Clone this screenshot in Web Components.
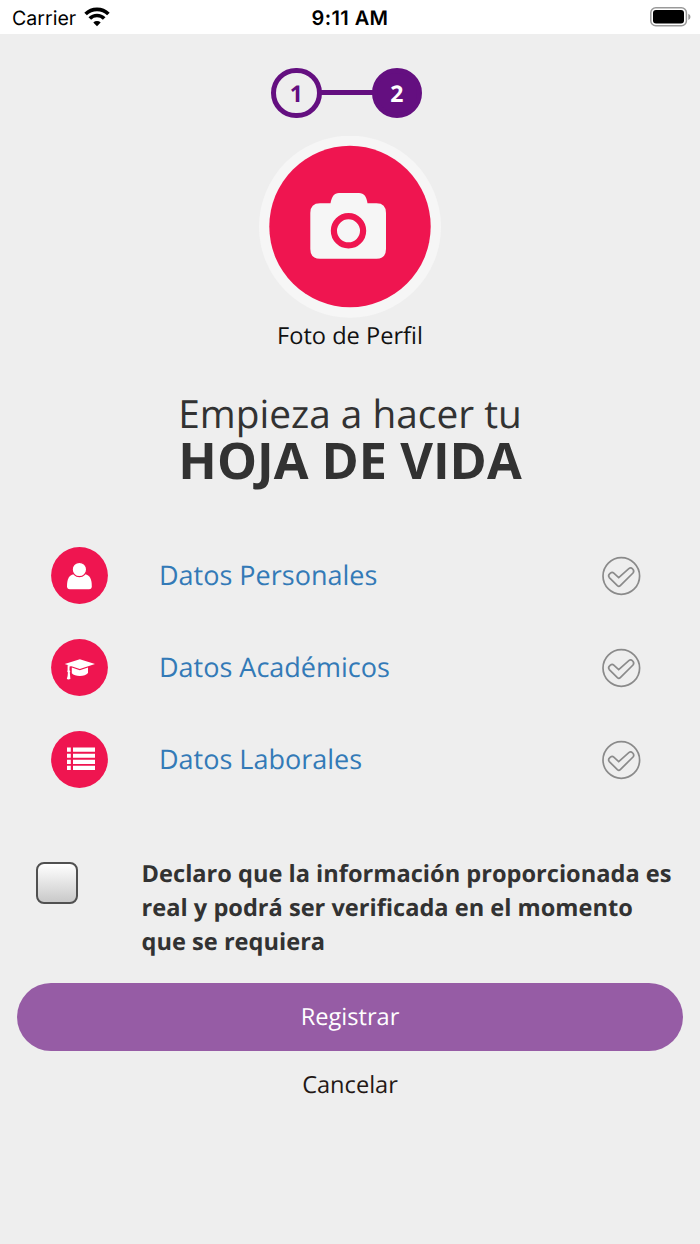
<!DOCTYPE html>
<html lang="es">
<head>
<meta charset="utf-8">
<title>Hoja de Vida</title>
<style>
  body {
    margin: 0;
    background: #eeeeee;
    font-family: "Open Sans", "Noto Sans", sans-serif;
    text-rendering: geometricPrecision;
    --pink: #ef1550;
    --purple: #640f80;
    --text: #323232;
  }
</style>
</head>
<body>
<resume-page></resume-page>

<script>
const icons = {
  user: `<path d="M22.5 27.3 H34.3 C38.6 28 40.8 32 40.8 39.2 Q40.8 42.2 38 42.2 H18.9 Q16 42.2 16 39.2 C16 32 18.2 28 22.5 27.3Z"/>
    <circle cx="28.4" cy="22.5" r="7.2" stroke="#ef1550" stroke-width="1.2"/>`,
  academic: `<path d="M13.7 25 L28.8 20.2 L44 25 L28.8 30Z"/>
    <path d="M20.8 28.4 L28.8 31.3 L37 28.4 V34 Q34.5 37 28.8 37 Q23.4 37 20.8 34.3Z"/>
    <path d="M16.6 26.2 L28 24.6 L28.4 25.3 L18.6 27.6 L18.5 31.2 Q19.9 32.1 18.8 33.5 L19.4 39.9 Q17.5 40.8 15.8 40 Q16.9 37 16.9 33.5 Q15.6 32.2 16.6 31.2Z"/>`,
  list: `<path d="M16 16.6h3.8v4.1H16zM22 16.6h22v4.1H22zM16 22.7h3.8v4.1H16zM22 22.7h22v4.1H22zM16 28.8h3.8v4.1H16zM22 28.8h22v4.1H22zM16 34.8h3.8v4.1H16zM22 34.8h22v4.1H22z"/>`
};

class StatusBar extends HTMLElement {
  constructor() {
    super();
    this.attachShadow({ mode: 'open' });
  }

  connectedCallback() {
    this.shadowRoot.innerHTML = `
      <style>
        :host {
          display: grid;
          grid-template-columns: 1fr auto 1fr;
          align-items: center;
          height: 34px;
          padding: 0 9px 0 12px;
          box-sizing: border-box;
          background: #fff;
          color: #000;
          font: 19.6px/34px Inter, sans-serif;
        }
        .carrier { display: flex; align-items: center; gap: 8px; }
        .carrier span, .time { padding-top: 2px; line-height: 32px; }
        .time { font-weight: 600; font-size: 20px; letter-spacing: 0.4px; margin-left: -3px; }
        .battery { justify-self: end; }
        svg { display: block; }
      </style>
      <div class="carrier">
        <span>Carrier</span>
        <svg width="26" height="20" viewBox="0 0 26 20">
          <g fill="none" stroke="#000" stroke-width="3.7">
            <path d="M1.6 7 A16.2 16.2 0 0 1 24.4 7"/>
            <path d="M5.8 11.5 A10.2 10.2 0 0 1 20.2 11.5"/>
          </g>
          <path d="M9.3 15.4 A5.4 5.4 0 0 1 16.7 15.4 L13 19.2Z"/>
        </svg>
      </div>
      <div class="time">9:11 AM</div>
      <svg class="battery" width="41" height="20" viewBox="0 0 41 20">
        <rect x="0.8" y="0.8" width="35.6" height="18" rx="5" fill="none" stroke="#999" stroke-width="1.5"/>
        <rect x="3" y="3" width="31" height="13.5" rx="3"/>
        <path d="M38.3 6.8 Q40.5 7.8 40.5 9.9 Q40.5 12 38.3 13Z" fill="#999"/>
      </svg>
    `;
  }
}
customElements.define('status-bar', StatusBar);

class StepIndicator extends HTMLElement {
  constructor() {
    super();
    this.attachShadow({ mode: 'open' });
  }

  connectedCallback() {
    this.shadowRoot.innerHTML = `
      <style>
        :host {
          display: flex;
          align-items: center;
          width: 151px;
          height: 50.5px;
          color: var(--purple);
          font: 700 23px/41px "Open Sans", sans-serif;
        }
        .step {
          box-sizing: border-box;
          width: 50.5px;
          height: 50.5px;
          border: 5px solid var(--purple);
          border-radius: 50%;
          text-align: center;
        }
        .active { background: var(--purple); color: #fff; }
        .line { flex: 1; height: 5px; margin: 0 -1px 1px; background: var(--purple); }
      </style>
      <div class="step">1</div>
      <div class="line"></div>
      <div class="step active">2</div>
    `;
  }
}
customElements.define('step-indicator', StepIndicator);

class ProfilePhoto extends HTMLElement {
  constructor() {
    super();
    this.attachShadow({ mode: 'open' });
  }

  connectedCallback() {
    this.shadowRoot.innerHTML = `
      <style>
        :host {
          display: flex;
          flex-direction: column;
          align-items: center;
          color: #111;
          font-size: 23.6px;
          line-height: 34px;
        }
        svg { display: block; }
      </style>
      <svg width="182" height="182" viewBox="0 0 182 182">
        <circle cx="91" cy="90.7" r="91" fill="#f6f6f6"/>
        <circle cx="91" cy="90.5" r="80.7" fill="#ef1550"/>
        <path fill="#f6f6f6" d="M61 67.2 H71.5 C73 60.5 75 57 80 57 H100 C105 57 107.5 60.5 108.5 67.2 H117.5 Q127 67.2 127 77 V113 Q127 122.8 117.5 122.8 H61 Q51.3 122.8 51.3 113 V77 Q51.3 67.2 61 67.2Z"/>
        <circle cx="89.5" cy="94.8" r="14.6" fill="none" stroke="#ef1550" stroke-width="6.2"/>
      </svg>
      <slot></slot>
    `;
  }
}
customElements.define('profile-photo', ProfilePhoto);

class ResumeSection extends HTMLElement {
  constructor() {
    super();
    this.attachShadow({ mode: 'open' });
  }

  connectedCallback() {
    this.shadowRoot.innerHTML = `
      <style>
        :host {
          display: grid;
          grid-template-columns: 108px 1fr 40px;
          align-items: center;
          height: 92px;
          padding: 0 59px 0 51px;
        }
        svg { display: block; }
        a {
          color: #337ab7;
          font-size: 27px;
          line-height: 40px;
          text-decoration: none;
          white-space: nowrap;
        }
        .check { fill: none; stroke: #8a8a8a; stroke-width: 1.7; margin-top: 2px; }
      </style>
      <svg width="57" height="57" viewBox="0 0 57 57">
        <circle cx="28.5" cy="28.5" r="28.4" fill="#ef1550"/>
        <g fill="#fff">${icons[this.getAttribute('icon')]}</g>
      </svg>
      <a><slot></slot></a>
      <svg class="check" width="40" height="40" viewBox="0 0 40 40">
        <circle cx="20.3" cy="20" r="18.3"/>
        <path d="M12.8 17.2 L17.7 21.6 L27.8 12.6 Q29.8 11.2 31.7 13 Q33.6 15 32 17 L19.3 29.6 Q17.9 31 16.4 29.6 L8.3 21.6 Q6.9 19.8 8.4 18.2 L9.4 17.2 Q11.2 15.7 12.8 17.2Z"/>
      </svg>
    `;
  }
}
customElements.define('resume-section', ResumeSection);

class DeclareCheck extends HTMLElement {
  constructor() {
    super();
    this.attachShadow({ mode: 'open' });
  }

  connectedCallback() {
    this.shadowRoot.innerHTML = `
      <style>
        :host {
          display: flex;
          align-items: flex-start;
          gap: 63.6px;
          padding-left: 36px;
          color: var(--text);
          font-weight: 700;
          font-size: 23.6px;
          line-height: 34px;
        }
        .box {
          flex: none;
          box-sizing: border-box;
          width: 42px;
          height: 42px;
          margin-top: 6px;
          border: 2px solid #505050;
          border-radius: 8px;
          background: linear-gradient(#fff, #c9c9c9);
        }
        .label { white-space: nowrap; }
      </style>
      <div class="box"></div>
      <div class="label"><slot></slot></div>
    `;
  }
}
customElements.define('declare-check', DeclareCheck);

class PillButton extends HTMLElement {
  constructor() {
    super();
    this.attachShadow({ mode: 'open' });
  }

  connectedCallback() {
    this.shadowRoot.innerHTML = `
      <style>
        :host {
          display: block;
          height: 67.5px;
          border-radius: 34px;
          background: #965ca5;
          color: #fff;
          font-size: 23.6px;
          line-height: 67px;
          text-align: center;
        }
        :host([plain]) { background: none; color: #231815; }
      </style>
      <slot></slot>
    `;
  }
}
customElements.define('pill-button', PillButton);

class ResumePage extends HTMLElement {
  constructor() {
    super();
    this.attachShadow({ mode: 'open' });
  }

  connectedCallback() {
    this.shadowRoot.innerHTML = `
      <style>
        :host { display: block; height: 1244px; overflow: hidden; }
        step-indicator { margin: 33.7px 0 0 271px; }
        profile-photo { margin-top: 17.8px; }
        h1 {
          margin: 39px 0 0;
          color: var(--text);
          font-weight: 400;
          font-size: 38.8px;
          line-height: 46px;
          text-align: center;
        }
        h1 strong { display: block; margin-top: -2px; font-size: 50.4px; line-height: 50px; }
        .sections { margin-top: 44.2px; }
        declare-check { margin-top: 51px; }
        pill-button { margin: 25px 17px 0; }
        pill-button[plain] { margin-top: 0; }
      </style>
      <status-bar></status-bar>
      <step-indicator></step-indicator>
      <profile-photo><span>Foto de Perfil</span></profile-photo>
      <h1><span>Empieza a hacer tu</span><strong>HOJA DE VIDA</strong></h1>
      <div class="sections">
        <resume-section icon="user">Datos Personales</resume-section>
        <resume-section icon="academic">Datos Académicos</resume-section>
        <resume-section icon="list">Datos Laborales</resume-section>
      </div>
      <declare-check>Declaro que la información proporcionada es<br>real y podrá ser verificada en el momento<br>que se requiera</declare-check>
      <pill-button>Registrar</pill-button>
      <pill-button plain>Cancelar</pill-button>
    `;
  }
}
customElements.define('resume-page', ResumePage);
</script>
</body>
</html>
